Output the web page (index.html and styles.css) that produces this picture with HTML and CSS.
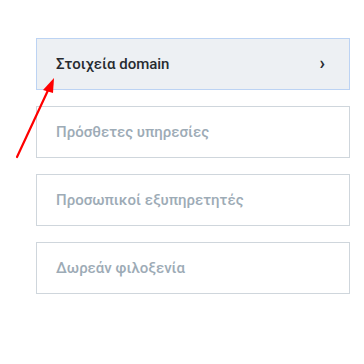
FILE: index.html
```html
<!DOCTYPE html>
<html lang="el">
<head>
  <meta charset="UTF-8" />
  <title>Υπηρεσίες</title>
  <link rel="stylesheet" href="styles.css">
</head>
<body>

  <div class="menu">
    <div class="menu-item active">
      <span>Στοιχεία domain</span>
      <span class="chevron">&#8250;</span>
    </div>
    <div class="menu-item"><span>Πρόσθετες υπηρεσίες</span></div>
    <div class="menu-item"><span>Προσωπικοί εξυπηρετητές</span></div>
    <div class="menu-item"><span>Δωρεάν φιλοξενία</span></div>
  </div>

  <!-- annotation arrow -->
  <svg class="pointer" width="364" height="364" viewBox="0 0 364 364">
    <line x1="17" y1="157" x2="50" y2="86" stroke="#f00" stroke-width="2.2" stroke-linecap="round" />
    <polygon points="54,78 43,90 53,93" fill="#f00" />
  </svg>

</body>
</html>
```

FILE: styles.css
```css
* {
  margin: 0;
  padding: 0;
  box-sizing: border-box;
}

html, body {
  height: 100%;
  background: #fff;
  font-family: Roboto, 'Noto Sans', sans-serif;
}

.menu {
  display: flex;
  flex-direction: column;
  gap: 16px;
  padding: 38px 14px 0 36px;
}

.menu-item {
  height: 52px;
  border: 1px solid #cfd6dc;
  display: flex;
  align-items: center;
  justify-content: space-between;
  padding: 0 24px 0 19px;
  font-size: 15px;
  font-weight: 500;
  color: #9dabb6;
}

.menu-item.active {
  background: #edf0f3;
  border-color: #bcd3f3;
  color: #272b30;
}

.chevron {
  font-size: 18px;
  font-weight: 700;
  line-height: 1;
  margin-top: -2px;
}

.pointer {
  position: absolute;
  top: 0;
  left: 0;
  pointer-events: none;
}
```
